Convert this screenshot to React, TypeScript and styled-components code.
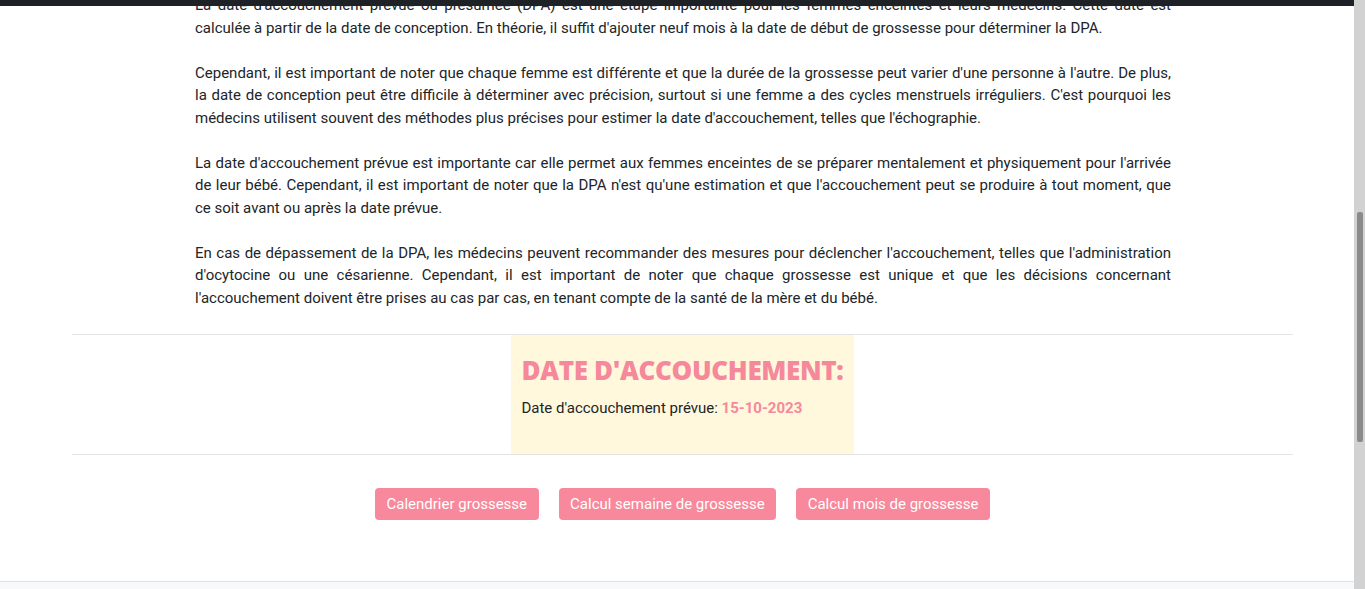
import React from "react";
import styled, { createGlobalStyle } from "styled-components";

const GlobalStyle = createGlobalStyle`
  html, body { margin: 0; padding: 0; background: #fff; overflow: hidden; }
  body { font-family: Roboto, "Liberation Sans", Arial, sans-serif; color: #212529; }
  * { box-sizing: border-box; }
`;

const Shell = styled.div`
  display: flex;
  height: 589px;
  overflow: hidden;
`;

const TopBar = styled.div`
  position: fixed;
  top: 0;
  left: 0;
  width: 1354px;
  height: 6px;
  background: #1e2226;
  z-index: 10;
`;

const Main = styled.div`
  flex: 1;
  display: flex;
  flex-direction: column;
  min-width: 0;
`;

const Content = styled.div`
  flex: 1;
  display: flex;
  flex-direction: column;
  padding: 0 61px 0 72px;
  margin-top: -6px;
`;

const Article = styled.div`
  padding: 0 122px 0 123px;
  font-size: 15px;
  line-height: 22.5px;
  text-align: justify;
  margin-bottom: 25px;
`;

const Para = styled.p`
  margin: 0 0 22.5px;
  &:last-child { margin-bottom: 0; }
`;

const Rule = styled.hr`
  margin: 0;
  border: 0;
  border-top: 1px solid #e4e4e4;
  width: 100%;
`;

const ResultRow = styled.div`
  display: flex;
  justify-content: center;
`;

const ResultBox = styled.div`
  background: #fff8dc;
  padding: 20px 10px 33px;
  height: 119px;
`;

const ResultTitle = styled.h2`
  margin: 0 0 10.5px;
  font-family: "Open Sans", "Noto Sans", sans-serif;
  font-weight: 800;
  font-size: 26px;
  line-height: 31.2px;
  letter-spacing: -0.35px;
  color: #f5899b;
  white-space: nowrap;
`;

const ResultText = styled.div`
  font-size: 15px;
  line-height: 22.5px;
  color: #212529;
`;

const Highlight = styled.span`
  color: #f5899b;
  font-weight: 700;
`;

const ButtonRow = styled.div`
  display: flex;
  justify-content: center;
  gap: 20px;
  margin-top: 33px;
`;

const PinkButton = styled.a`
  display: inline-block;
  background: #f8889b;
  color: #fff;
  font-size: 15px;
  line-height: 22px;
  padding: 5px 11.5px;
  border-radius: 4px;
  text-decoration: none;
  white-space: nowrap;
`;

const Footer = styled.div`
  height: 8px;
  border-top: 1px solid #dee2e6;
  background: #f8f9fa;
`;

const ScrollTrack = styled.div`
  width: 11px;
  background: #d2d2d2;
  padding: 212px 2px 0 3px;
`;

const ScrollThumb = styled.div`
  height: 230px;
  background: #8a8a8a;
  border-radius: 2px;
`;

export default function App() {
  return (
    <>
      <GlobalStyle />
      <TopBar />
      <Shell>
        <Main>
          <Content>
            <Article>
              <Para>
                La date d'accouchement prévue ou présumée (DPA) est une étape importante pour les femmes enceintes et leurs médecins. Cette date est calculée à partir de la date de conception. En théorie, il suffit d'ajouter neuf mois à la date de début de grossesse pour déterminer la DPA.
              </Para>
              <Para>
                Cependant, il est important de noter que chaque femme est différente et que la durée de la grossesse peut varier d'une personne à l'autre. De plus, la date de conception peut être difficile à déterminer avec précision, surtout si une femme a des cycles menstruels irréguliers. C'est pourquoi les médecins utilisent souvent des méthodes plus précises pour estimer la date d'accouchement, telles que l'échographie.
              </Para>
              <Para>
                La date d'accouchement prévue est importante car elle permet aux femmes enceintes de se préparer mentalement et physiquement pour l'arrivée de leur bébé. Cependant, il est important de noter que la DPA n'est qu'une estimation et que l'accouchement peut se produire à tout moment, que ce soit avant ou après la date prévue.
              </Para>
              <Para>
                En cas de dépassement de la DPA, les médecins peuvent recommander des mesures pour déclencher l'accouchement, telles que l'administration d'ocytocine ou une césarienne. Cependant, il est important de noter que chaque grossesse est unique et que les décisions concernant l'accouchement doivent être prises au cas par cas, en tenant compte de la santé de la mère et du bébé.
              </Para>
            </Article>
            <Rule />
            <ResultRow>
              <ResultBox>
                <ResultTitle>DATE D'ACCOUCHEMENT:</ResultTitle>
                <ResultText>
                  Date d'accouchement prévue: <Highlight>15-10-2023</Highlight>
                </ResultText>
              </ResultBox>
            </ResultRow>
            <Rule />
            <ButtonRow>
              <PinkButton href="#">Calendrier grossesse</PinkButton>
              <PinkButton href="#">Calcul semaine de grossesse</PinkButton>
              <PinkButton href="#">Calcul mois de grossesse</PinkButton>
            </ButtonRow>
          </Content>
          <Footer />
        </Main>
        <ScrollTrack>
          <ScrollThumb />
        </ScrollTrack>
      </Shell>
    </>
  );
}
